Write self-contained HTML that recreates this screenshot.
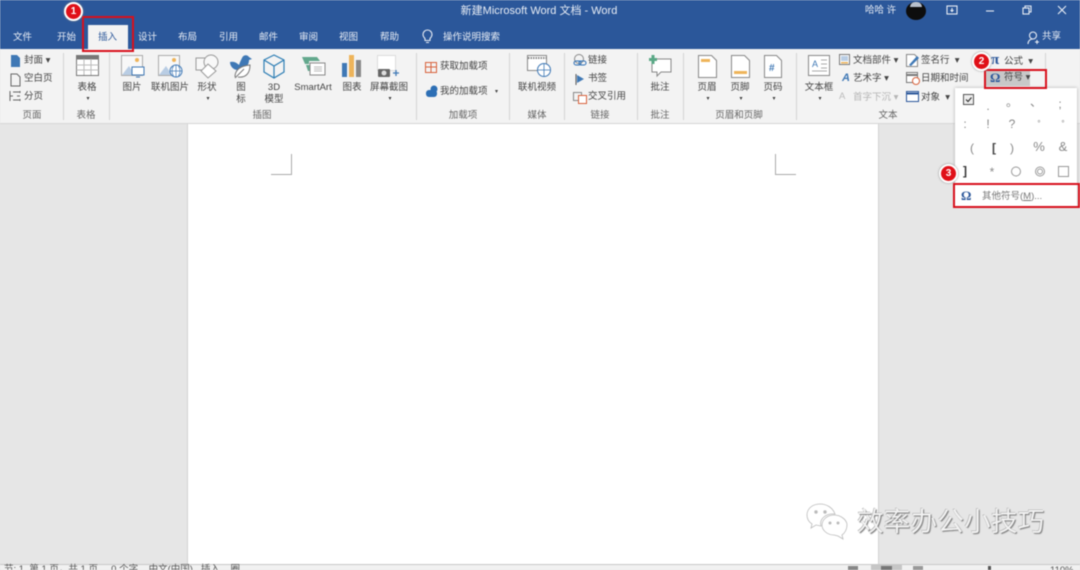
<!DOCTYPE html>
<html><head><meta charset="utf-8">
<style>
html,body{margin:0;padding:0;width:1080px;height:570px;overflow:hidden;background:#e6e6e6}
body{position:relative;font-family:"Liberation Sans","Noto Sans CJK SC",sans-serif;font-size:9.5px;color:#444}
#r{position:absolute;left:0;top:0;width:1080px;height:570px;overflow:hidden;filter:blur(.45px)}
.a{position:absolute}
.t{position:absolute;white-space:nowrap;line-height:12px;margin-top:1px}
.c{position:absolute;white-space:nowrap;line-height:12px;text-align:center;transform:translateX(-50%);margin-top:1px}
.w{color:#e8edf5}
.g{color:#666}
.s{position:absolute;top:53px;width:1px;height:67px;background:#d5d5d5}
.red{position:absolute;border:2px solid #d8101c;box-sizing:border-box}
.n{position:absolute;width:15px;height:15px;border-radius:50%;background:#e01018;border:2px solid #fff;color:#fff;font-size:10px;font-weight:bold;line-height:15px;text-align:center;box-shadow:0 0 2px #888}
.y{position:absolute;color:#888;font-size:12px;line-height:14px;text-align:center;width:20px;transform:translateX(-50%);margin-top:1px}
svg{position:absolute;overflow:visible}
</style></head><body><div id="r">
<div class="a" style="left:0;top:0;width:1080px;height:49px;background:#2b579a"></div>
<div class="a" style="left:0;top:49px;width:1080px;height:74px;background:#f3f3f3;border-bottom:1px solid #d6d6d6"></div>
<div class="a" style="left:187px;top:124px;width:692px;height:441px;box-sizing:border-box;background:#fff;border-left:1px solid #d2d2d2;border-right:1px solid #d2d2d2"></div>
<div class="a" style="left:0;top:564px;width:1080px;height:6px;background:#f1f1f1;border-top:1px solid #c8c8c8"></div>

<div class="c w" style="left:539px;top:4px;font-size:11px">新建Microsoft Word 文档 - Word</div>
<div class="t w" style="left:865px;top:4px;font-size:9.5px">哈哈 许</div>
<div class="a" style="left:906px;top:2px;width:20px;height:18px;border-radius:50%;background:#0d0d0d"></div>
<div class="a" style="left:910px;top:2px;width:12px;height:5px;border-radius:8px 8px 0 0;background:#b8c0cc"></div>
<svg style="left:946px;top:5px" width="120" height="12" fill="none" stroke="#e8edf5" stroke-width="1.1">
<rect x="1" y="1" width="10" height="8"/><path d="M6 3v3M4.500 5l1.500 1.500L7.500 5"/>
<path d="M40 6h8"/>
<rect x="77" y="3" width="6" height="6"/><path d="M79 3V1h6v6h-2"/>
<path d="M112 1l8 8M120 1l-8 8"/>
</svg>
<svg style="left:1027px;top:31px" width="14" height="14" fill="none" stroke="#e8edf5" stroke-width="1.100"><circle cx="6" cy="4.500" r="3.500"/><path d="M1 13c0-3 2-5 5-5M8 11h4M10 9v4"/></svg>
<div class="t w" style="left:1042px;top:30px">共享</div>

<div class="t w" style="left:13px;top:31px">文件</div>
<div class="t w" style="left:57px;top:31px">开始</div>
<div class="a" style="left:88px;top:25px;width:40px;height:24px;background:#f3f3f3"></div>
<div class="t" style="left:98px;top:31px;color:#2b579a">插入</div>
<div class="t w" style="left:138px;top:31px">设计</div>
<div class="t w" style="left:178px;top:31px">布局</div>
<div class="t w" style="left:219px;top:31px">引用</div>
<div class="t w" style="left:259px;top:31px">邮件</div>
<div class="t w" style="left:299px;top:31px">审阅</div>
<div class="t w" style="left:339px;top:31px">视图</div>
<div class="t w" style="left:380px;top:31px">帮助</div>
<svg style="left:422px;top:29px" width="11" height="15" fill="none" stroke="#e8edf5" stroke-width="1.100"><path d="M3 9.500C1.500 8 1 7 1 5.500a4.500 4.500 0 0 1 9 0c0 1.500-.5 2.500-2 4v2H3zM4 13.500h3"/></svg>
<div class="t w" style="left:443px;top:31px">操作说明搜索</div>

<div class="s" style="left:63px"></div><div class="s" style="left:109px"></div><div class="s" style="left:416px"></div><div class="s" style="left:509px"></div><div class="s" style="left:564px"></div><div class="s" style="left:637px"></div><div class="s" style="left:683px"></div><div class="s" style="left:796px"></div><div class="s" style="left:1045px"></div>

<div class="c g" style="left:32px;top:109px">页面</div>
<div class="c g" style="left:86px;top:109px">表格</div>
<div class="c g" style="left:262px;top:109px">插图</div>
<div class="c g" style="left:463px;top:109px">加载项</div>
<div class="c g" style="left:537px;top:109px">媒体</div>
<div class="c g" style="left:600px;top:109px">链接</div>
<div class="c g" style="left:660px;top:109px">批注</div>
<div class="c g" style="left:739px;top:109px">页眉和页脚</div>
<div class="c g" style="left:888px;top:109px">文本</div>

<svg style="left:10px;top:54px" width="12" height="50" fill="none"><path d="M1 1h6l3 3v9H1z" fill="#3f78b5"/><path d="M1 20h6l3 3v9H1z" stroke="#666"/><path d="M0 37v10M0 42h3M3 38h7M3 46h7M10 37v2M10 45v2M7 42h3" stroke="#666"/></svg>
<div class="t" style="left:24px;top:54px">封面 ▾</div>
<div class="t" style="left:24px;top:72px">空白页</div>
<div class="t" style="left:24px;top:90px">分页</div>

<svg style="left:76px;top:55px" width="23" height="22"><rect width="22" height="20" x=".5" y=".5" fill="#fff" stroke="#777"/><rect x=".5" y=".5" width="22" height="4" fill="#777"/><path d="M.5 10h22M.5 15h22M8 4v16M15 4v16" stroke="#bbb" fill="none"/></svg>
<div class="c" style="left:87px;top:81px">表格</div><div class="c" style="left:88px;top:92px;font-size:6px">▾</div>

<svg style="left:121px;top:55px" width="24" height="24"><rect x=".5" y=".5" width="21" height="20" fill="#f8f8f8" stroke="#aaa"/><path d="M1 20l7-9 6 9z" fill="#b9cde4"/><circle cx="16" cy="5" r="2" fill="#eeb45a"/><rect x="11" y="12" width="12" height="8" fill="#fff" stroke="#3f78b5"/><path d="M15 22h4" stroke="#3f78b5"/></svg>
<div class="c" style="left:132px;top:81px">图片</div>
<svg style="left:158px;top:55px" width="25" height="24"><rect x=".5" y=".5" width="21" height="20" fill="#f8f8f8" stroke="#aaa"/><path d="M1 20l7-9 6 9z" fill="#b9cde4"/><circle cx="16" cy="5" r="2" fill="#eeb45a"/><circle cx="18" cy="16" r="6" fill="#fff" stroke="#3f78b5"/><path d="M12 16h12M18 10v12M15.500 11c-2 3-2 7 0 10M20.500 11c2 3 2 7 0 10" fill="none" stroke="#3f78b5" stroke-width=".7"/></svg>
<div class="c" style="left:170px;top:81px">联机图片</div>
<svg style="left:195px;top:54px" width="25" height="25" fill="#f8f8f8" stroke="#999"><rect x="1" y="4" width="13" height="12"/><circle cx="16" cy="8" r="7"/><path d="M13 10l8 7-8 7-7-7z" fill="#fff"/></svg>
<div class="c" style="left:207px;top:81px">形状</div><div class="c" style="left:208px;top:92px;font-size:6px">▾</div>
<svg style="left:229px;top:53px" width="24" height="27"><path d="M1 9c4-1 7 1 9 3 1-3 2-5 3-7 1-3 5-4 7-1l3 2-3 1c0 4-2 7-5 8l-6 2C4 17 1 13 1 9z" fill="#3f78b5"/><path d="M6 24c0-6 4-11 15-12 0 8-4 13-12 12" fill="#fff" stroke="#777"/><path d="M6 25l9-9" stroke="#777"/></svg>
<div class="c" style="left:241px;top:81px">图</div><div class="c" style="left:241px;top:93px">标</div>
<svg style="left:263px;top:54px" width="22" height="25" fill="none" stroke="#2f7fb5" stroke-width="1.200"><path d="M11 1l10 5v12l-10 6-10-6V6zM1 6l10 6 10-6M11 12v12"/></svg>
<div class="c" style="left:274px;top:81px">3D</div><div class="c" style="left:274px;top:93px">模型</div>
<svg style="left:301px;top:56px" width="25" height="22"><path d="M1 1h15l3 4H8v3H4z" fill="#63a88d"/><path d="M5 9h4v6H7z" fill="#63a88d"/><rect x="9" y="7" width="15" height="12" fill="#fff" stroke="#888"/><path d="M13 11h8M13 13h8M13 15h8" stroke="#bbb"/></svg>
<div class="c" style="left:313px;top:81px">SmartArt</div>
<svg style="left:342px;top:55px" width="20" height="23"><rect y="8" width="5" height="14" fill="#3f78b5"/><rect x="7" width="5" height="22" fill="#eeb45a"/><rect x="14" y="5" width="5" height="17" fill="#888"/></svg>
<div class="c" style="left:352px;top:81px">图表</div>
<svg style="left:377px;top:55px" width="24" height="24"><rect x=".5" y=".5" width="18" height="15" fill="#fff" stroke="#ddd"/><rect x="1" y="14" width="12" height="8" rx="1" fill="#666"/><circle cx="7" cy="18" r="2.500" fill="#ddd"/><path d="M16 18h6M19 15v6" stroke="#3f78b5" stroke-width="1.300"/></svg>
<div class="c" style="left:389px;top:81px">屏幕截图</div><div class="c" style="left:390px;top:92px;font-size:6px">▾</div>

<svg style="left:425px;top:60px" width="13" height="13" fill="none" stroke="#d8623c"><rect x=".5" y="2.500" width="11" height="10"/><path d="M6 2.500v10M.5 7h11"/></svg>
<div class="t" style="left:440px;top:60px">获取加载项</div>
<svg style="left:426px;top:85px" width="13" height="12"><circle cx="8" cy="4" r="3.500" fill="#2d6fb5"/><rect x="0" y="5" width="11" height="7" rx="3" fill="#2d6fb5"/></svg>
<div class="t" style="left:440px;top:85px">我的加载项</div><div class="t" style="left:495px;top:85px;font-size:6px">▾</div>

<svg style="left:527px;top:55px" width="27" height="24"><rect x=".5" y=".5" width="19" height="15" fill="#fff" stroke="#888"/><path d="M1 3h18" stroke="#888" stroke-dasharray="1.500 1" stroke-width="2"/><circle cx="17" cy="15" r="6.500" fill="#fff" stroke="#3f78b5"/><path d="M10.500 15h13M17 8.500v13" stroke="#3f78b5" stroke-width=".8"/></svg>
<div class="c" style="left:537px;top:81px">联机视频</div>

<svg style="left:573px;top:54px" width="14" height="50" fill="none"><circle cx="6" cy="5" r="4.500" stroke="#888"/><rect x="1" y="7" width="7" height="4" rx="2" stroke="#2d6fb5"/><rect x="6" y="7" width="7" height="4" rx="2" stroke="#2d6fb5"/><path d="M3 20v11" stroke="#555"/><path d="M4 21l7 4-7 4z" fill="#3f78b5"/><rect x=".5" y="38.500" width="8" height="8" stroke="#888"/><rect x="5.500" y="41.500" width="8" height="8" fill="#fff" stroke="#d8623c"/></svg>
<div class="t" style="left:588px;top:54px">链接</div>
<div class="t" style="left:588px;top:72px">书签</div>
<div class="t" style="left:588px;top:90px">交叉引用</div>

<svg style="left:648px;top:54px" width="25" height="24"><path d="M4 5h19v13H13l-4 4v-4H4z" fill="#fff" stroke="#888"/><path d="M5 1v9M1 5.500h8" stroke="#5aa886" stroke-width="3"/></svg>
<div class="c" style="left:660px;top:81px">批注</div>

<svg style="left:698px;top:55px" width="20" height="24"><path d="M.5.500h13l5 5v17H.5z" fill="#fff" stroke="#888"/><rect x="3" y="4" width="9" height="3" fill="#eeb45a"/></svg>
<div class="c" style="left:707px;top:81px">页眉</div><div class="c" style="left:708px;top:92px;font-size:6px">▾</div>
<svg style="left:731px;top:55px" width="20" height="24"><path d="M.5.500h13l5 5v17H.5z" fill="#fff" stroke="#888"/><rect x="3" y="16" width="13" height="3" fill="#eeb45a"/></svg>
<div class="c" style="left:740px;top:81px">页脚</div><div class="c" style="left:741px;top:92px;font-size:6px">▾</div>
<svg style="left:764px;top:55px" width="18" height="24"><path d="M.5.500h12l5 5v17H.5z" fill="#fff" stroke="#888"/><text x="5" y="16" font-size="10" font-weight="bold" fill="#3f78b5" font-family="Liberation Sans">#</text></svg>
<div class="c" style="left:773px;top:81px">页码</div><div class="c" style="left:774px;top:92px;font-size:6px">▾</div>

<svg style="left:808px;top:55px" width="23" height="22"><rect x=".5" y=".5" width="21" height="20" fill="#fff" stroke="#888"/><path d="M13 5h6M13 9h6M13 13h6M4 16h15" stroke="#aaa"/><text x="4" y="12" font-size="9" fill="#3f78b5" font-family="Liberation Sans">A</text></svg>
<div class="c" style="left:819px;top:81px">文本框</div><div class="c" style="left:820px;top:92px;font-size:6px">▾</div>

<svg style="left:839px;top:54px" width="12" height="12"><rect x=".5" y=".5" width="10" height="10" fill="#fff" stroke="#777"/><rect x="2" y="2" width="7" height="5" fill="#b9cde4"/><rect x="2" y="8" width="7" height="1.500" fill="#eeb45a"/></svg>
<div class="t" style="left:853px;top:54px">文档部件 ▾</div>
<div class="t" style="left:842px;top:71px;color:#3f78b5;font-weight:bold;font-style:italic;font-size:11px">A</div>
<div class="t" style="left:853px;top:72px">艺术字 ▾</div>
<div class="t" style="left:839px;top:90px;color:#bbb">A</div>
<div class="t" style="left:853px;top:91px;color:#b5b5b5">首字下沉 ▾</div>

<svg style="left:906px;top:54px" width="14" height="14" fill="none"><path d="M.5.500h8l3 3v9H.500z" fill="#fff" stroke="#888"/><path d="M3 11l8-9 2 2-8 8z" fill="#3f78b5"/></svg>
<div class="t" style="left:921px;top:54px">签名行 &nbsp;▾</div>
<svg style="left:906px;top:72px" width="14" height="13" fill="none"><rect x=".5" y=".5" width="11" height="10" fill="#fff" stroke="#777"/><path d="M1 3h10" stroke="#777" stroke-width="2"/><circle cx="10" cy="9" r="3.500" fill="#fff" stroke="#d8623c"/></svg>
<div class="t" style="left:921px;top:72px">日期和时间</div>
<svg style="left:906px;top:91px" width="13" height="12" fill="none"><rect x=".5" y=".5" width="12" height="10" fill="#fff" stroke="#2b579a"/><path d="M1 2.500h11" stroke="#2b579a" stroke-width="2"/></svg>
<div class="t" style="left:921px;top:91px">对象 &nbsp;▾</div>

<div class="t" style="left:991px;top:53px;color:#2b579a;font-size:15px;font-family:'Liberation Serif',serif;font-weight:bold">π</div>
<div class="t" style="left:1004px;top:55px">公式 &nbsp;▾</div>
<div class="a" style="left:985px;top:70px;width:45px;height:16px;background:#c8c8c8"></div>
<div class="t" style="left:990px;top:71px;color:#2b579a;font-size:13px;font-family:'Liberation Serif',serif;font-weight:bold">Ω</div>
<div class="t" style="left:1004px;top:71px">符号 ▾</div>

<div class="a" style="left:955px;top:88px;width:122px;height:118px;background:#fff;box-shadow:0 0 3px #aaa"></div>
<svg style="left:963px;top:94px" width="11" height="11" fill="none"><rect x=".5" y=".5" width="10" height="10" fill="#eee" stroke="#555"/><path d="M3 5.500l2 2 3.500-4" stroke="#333" stroke-width="1.200"/></svg>
<div class="y" style="left:988px;top:98px">.</div><div class="y" style="left:1012px;top:94px">。</div><div class="y" style="left:1036px;top:94px">、</div><div class="y" style="left:1060px;top:96px">;</div>
<div class="y" style="left:965px;top:116px">:</div><div class="y" style="left:988px;top:116px">!</div><div class="y" style="left:1012px;top:116px">?</div><div class="y" style="left:1039px;top:116px;font-size:8px">°</div><div class="y" style="left:1063px;top:116px;font-size:8px">°</div>
<div class="y" style="left:972px;top:140px">(</div><div class="y" style="left:994px;top:140px;color:#444;font-weight:bold">[</div><div class="y" style="left:1012px;top:140px">)</div><div class="y" style="left:1039px;top:139px;font-size:13px">%</div><div class="y" style="left:1063px;top:139px;font-size:13px">&amp;</div>
<div class="y" style="left:965px;top:163px;color:#333;font-weight:bold">]</div><div class="y" style="left:992px;top:164px">*</div>
<svg style="left:1010px;top:165px" width="62" height="13" fill="none" stroke="#999"><circle cx="6" cy="6.500" r="4.500"/><circle cx="30" cy="6.500" r="4.500"/><circle cx="30" cy="6.500" r="2.500"/><rect x="48.500" y="1.500" width="10" height="10"/></svg>
<div class="t" style="left:961px;top:189px;color:#2b579a;font-size:13px;font-family:'Liberation Serif',serif;font-weight:bold">Ω</div>
<div class="t" style="left:982px;top:190px;color:#777">其他符号(<u>M</u>)...</div>

<div class="a" style="left:271px;top:154px;width:20px;height:20px;border-right:1px solid #aaa;border-bottom:1px solid #aaa"></div>
<div class="a" style="left:775px;top:154px;width:20px;height:20px;border-left:1px solid #aaa;border-bottom:1px solid #aaa"></div>

<div class="red" style="left:82px;top:16px;width:52px;height:36px"></div>
<div class="red" style="left:984px;top:69px;width:63px;height:20px"></div>
<div class="red" style="left:953px;top:183px;width:127px;height:25px"></div>
<div class="n" style="left:64px;top:2px">1</div>
<div class="n" style="left:972px;top:52px">2</div>
<div class="n" style="left:939px;top:164px">3</div>

<svg style="left:806px;top:503px" width="46" height="36" fill="#fff" stroke="#bbb" stroke-width=".8"><path d="M14 1C6 1 1 6 1 12c0 4 2 7 5 9l-1 4 5-3 5 1C13 16 20 10 29 11 27 5 21 1 14 1z"/><path d="M28 12c-7 0-12 5-12 10s5 10 12 10l4 1 5 3-1-4c3-2 5-6 5-10 0-5-6-10-13-10z"/><circle cx="10" cy="9" r="1.300" fill="#bbb"/><circle cx="19" cy="9" r="1.300" fill="#bbb"/><circle cx="24" cy="20" r="1.100" fill="#bbb"/><circle cx="32" cy="20" r="1.100" fill="#bbb"/></svg>
<div class="t" style="left:857px;top:504px;font-size:26.5px;line-height:34px;color:#f2f2f2;text-shadow:1px 1px 1px #777,-.5px -.5px 0 #aaa;letter-spacing:.3px">效率办公小技巧</div>

<div class="t" style="left:4px;top:563px;color:#555">节: 1 &nbsp;第 1 页，共 1 页 &nbsp; &nbsp; 0 个字 &nbsp; &nbsp;中文(中国) &nbsp; 插入 &nbsp; &nbsp;圈</div>
<div class="a" style="left:871px;top:565px;width:31px;height:5px;background:#c6c6c6"></div>
<div class="a" style="left:848px;top:566px;width:10px;height:4px;background:#888"></div>
<div class="a" style="left:881px;top:566px;width:11px;height:4px;background:#777"></div>
<div class="a" style="left:913px;top:566px;width:10px;height:4px;background:#999"></div>
<div class="a" style="left:988px;top:566px;width:3px;height:4px;background:#555"></div>
<div class="t" style="left:1050px;top:564px;color:#555">110%</div>
</div></body></html>
